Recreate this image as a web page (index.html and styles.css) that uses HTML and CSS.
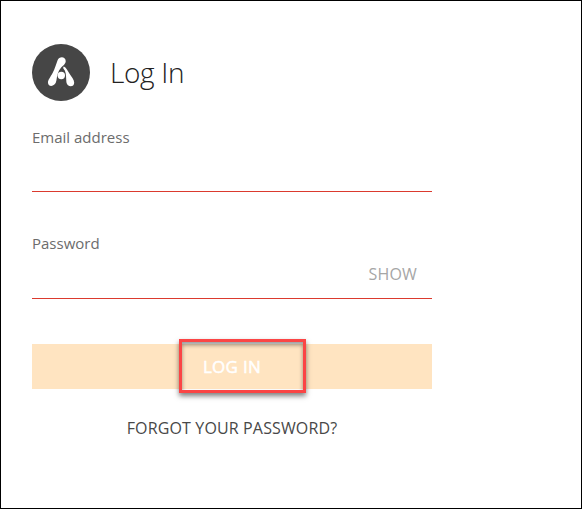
FILE: index.html
```html
<!DOCTYPE html>
<html lang="en">
<head>
<meta charset="utf-8">
<title>Log In</title>
<link rel="stylesheet" href="styles.css">
</head>
<body>
<main class="page">
  <form class="login">
    <header class="brand">
      <svg class="logo" viewBox="0 0 58 57" preserveAspectRatio="none" aria-hidden="true">
        <ellipse cx="29" cy="28.5" rx="29" ry="28.5" fill="#464646"/>
        <path d="M25.500 16.500C27 12 33.500 12.200 33.700 17C33.800 20 31 21.500 28.800 24C26 27.200 25.200 31 24.400 36.500C23.500 42.800 16.500 43.600 16 39C15.700 36 18.500 33 20.600 29C23 24.400 24 20.500 25.500 16.500Z" fill="#fff"/>
        <path d="M31.800 22.500C34.200 23.400 35.400 26.500 37.400 29.500C39.600 33 42.200 35.800 42.200 38.700C42.200 43.500 35.200 43.500 34.400 38.200C34 34.500 34.400 30 32.800 26.500C31.900 24.800 30.400 24.300 31.800 22.500Z" fill="#fff"/>
        <circle cx="29.300" cy="31.500" r="3.700" fill="#fff"/>
      </svg>
      <h1 class="title">Log In</h1>
    </header>
    <div class="field email">
      <label class="label" for="email">Email address</label>
      <input class="input" id="email" type="text">
    </div>
    <div class="field password">
      <label class="label" for="password">Password</label>
      <div class="entry">
        <input class="input" id="password" type="password">
        <span class="show">SHOW</span>
      </div>
    </div>
    <div class="submit">
      <span class="submit-text">LOG IN</span>
      <span class="highlight"></span>
    </div>
    <a class="forgot">FORGOT YOUR PASSWORD?</a>
  </form>
</main>
</body>
</html>
```
FILE: styles.css
```css
* { box-sizing: border-box; }
body {
  margin: 0;
  background: #fff;
  font-family: "Open Sans", "Noto Sans", sans-serif;
}
.page {
  width: 582px;
  height: 509px;
  border: 1px solid #000;
  padding: 43px 31px;
  overflow: hidden;
}
.login { width: 400px; }
.brand {
  display: flex;
  align-items: center;
  gap: 20px;
  height: 57px;
}
.logo { width: 58px; height: 57px; }
.title {
  margin: 0;
  padding-bottom: 2px;
  font-size: 28px;
  font-weight: 300;
  line-height: 38px;
  letter-spacing: -0.35px;
  color: #222;
}
.field {
  display: flex;
  flex-direction: column;
  border-bottom: 1px solid #db3a2e;
}
.email { height: 66px; margin-top: 25px; }
.password { height: 67px; margin-top: 40px; }
.label {
  font-size: 15px;
  line-height: 22px;
  color: #6c6c6c;
}
.input {
  flex: 1;
  min-width: 0;
  width: 100%;
  padding: 0;
  border: 0;
  outline: 0;
  background: transparent;
}
.entry { display: flex; flex: 1; }
.show {
  padding: 9px 15px 0 0;
  font-size: 16px;
  line-height: 22px;
  letter-spacing: 0.15px;
  color: #a6a6a6;
}
.submit {
  position: relative;
  height: 45px;
  margin-top: 45px;
  background: #ffe4c1;
  text-align: center;
}
.submit-text {
  font-size: 17px;
  line-height: 45px;
  letter-spacing: 0.3px;
  color: #fff;
  -webkit-text-stroke: 0.5px #fff;
}
.highlight {
  position: absolute;
  left: 147px;
  top: -5px;
  width: 127px;
  height: 54px;
  border: 3px solid #fb4545;
  box-shadow: 0 3px 5px rgba(0, 0, 0, .5), inset 0 3px 4px rgba(0, 0, 0, .4);
}
.forgot {
  display: block;
  margin-top: 28px;
  text-align: center;
  font-size: 16px;
  line-height: 22px;
  letter-spacing: 0.14px;
  color: #484848;
}
```
